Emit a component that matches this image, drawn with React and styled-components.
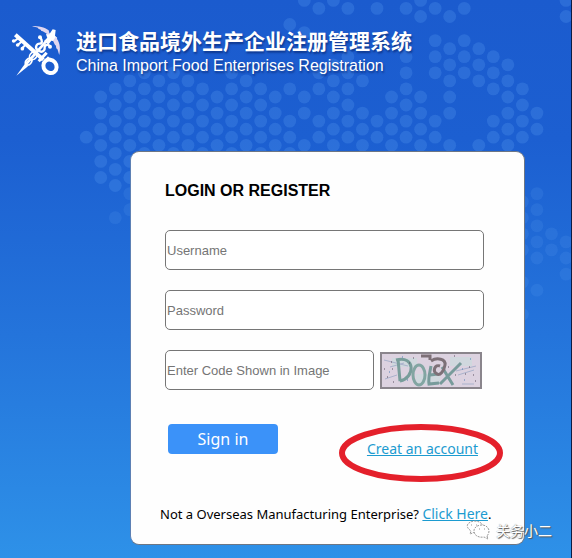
import React from 'react';
import styled, { createGlobalStyle } from 'styled-components';

const GlobalStyle = createGlobalStyle`
    * {
        box-sizing: border-box;
    }
    body {
        margin: 0;
        font-family: "Liberation Sans", Arial, sans-serif;
    }
`

const Page = styled.div`
    position: relative;
    display: flex;
    flex-direction: column;
    min-height: 100vh;
    overflow: hidden;
    border-right: 1px solid #0c1c44;
    background: linear-gradient(#1b5bce 0%, #1c5fd1 25%, #2474db 60%, #2e91e8 100%);
`
const MapArt = styled.svg`
    position: absolute;
    top: 0;
    left: 0;
    pointer-events: none;
`
const Header = styled.header`
    position: relative;
    display: flex;
    align-items: flex-start;
    gap: 14px;
    padding: 24px 10px 0;
    color: #fff;
`
const Titles = styled.div`
    display: flex;
    flex-direction: column;
    gap: 2px;
    padding-top: 3px;
    text-shadow: 1px 2px 2px rgba(0, 20, 80, 0.5);
`
const Title = styled.h1`
    margin: 0;
    font-family: "Noto Sans CJK SC", sans-serif;
    font-size: 21px;
    line-height: 26px;
    font-weight: bold;
`
const SubTitle = styled.span`
    font-size: 16px;
    line-height: 22px;
`
const Card = styled.form`
    position: relative;
    display: flex;
    flex-direction: column;
    margin: 74px 46px 13px 130px;
    padding: 29px 40px 20px 34px;
    border: 1px solid #6d7684;
    border-left-color: #5c80b4;
    border-radius: 9px;
    background-color: #fefefe;
`
const Heading = styled.h2`
    margin: 0 0 29px;
    font-size: 16px;
    line-height: 20px;
    color: #000;
`
const Field = styled.input`
    width: 100%;
    min-width: 0;
    height: 40px;
    margin-bottom: 20px;
    padding: 1px;
    border: 1px solid #767676;
    border-radius: 5px;
    background-color: #fff;
    font-family: inherit;
    font-size: 13px;
    &::placeholder {
        color: #757575;
        opacity: 1;
    }
`
const CodeRow = styled.div`
    display: flex;
    gap: 6px;
    padding-right: 2px;
`
const Captcha = styled.svg`
    flex: none;
    margin-top: 2px;
    border: 2px solid #8a858c;
`
const Actions = styled.div`
    display: flex;
    align-items: flex-start;
    justify-content: space-between;
    margin-top: 14px;
    padding: 0 6px 0 3px;
`
const SignIn = styled.button`
    width: 110px;
    height: 30px;
    padding: 0;
    border: none;
    border-radius: 4px;
    background-color: #3b92f9;
    color: #fff;
    font-family: "Noto Sans", sans-serif;
    font-size: 16px;
    cursor: pointer;
`
const Link = styled.a`
    color: #1c9bd0;
    font-family: "Noto Sans", sans-serif;
    font-size: 14px;
    line-height: 20px;
`
const Circled = styled.span`
    position: relative;
    margin-top: 15px;
`
const Ring = styled.svg`
    position: absolute;
    top: -17px;
    left: -29px;
    pointer-events: none;
`
const Note = styled.p`
    margin: 45px -20px 0 -5px;
    color: #000;
    font-family: "Noto Sans", sans-serif;
    font-size: 13px;
    line-height: 20px;
`
const Watermark = styled.div`
    position: absolute;
    right: 19px;
    bottom: 18px;
    display: flex;
    align-items: center;
    gap: 6px;
    color: #fff;
    font-family: "Noto Sans CJK SC", sans-serif;
    font-size: 14px;
    line-height: 20px;
    text-shadow: 1px 1px 1px #555, 0 0 1px #777;
`

// rows of dots that are filled in each column of the world map
const columns = {
    0: [8],
    1: [6, 7, 8, 9, 10, 11],
    2: [5, 6, 7, 8, 9, 10, 11, 13],
    3: [5, 6, 7, 8, 9, 10, 11, 12, 13],
    4: [4, 5, 6, 7, 8, 9],
    5: [5, 6, 7, 8, 9],
    6: [4, 5, 6, 7, 8, 9],
    7: [5, 6, 7, 8, 9],
    8: [5, 6, 7, 8, 9],
    9: [6, 7, 8, 9],
    10: [4, 5, 6, 7, 8, 9],
    11: [5, 6, 7, 8, 9],
    12: [5, 6, 7, 8, 9],
    13: [6, 7, 8, 9],
    14: [1, 5, 7, 8, 9],
    15: [0, 2, 6, 7, 9],
    16: [0, 4, 5, 7, 8],
    17: [0, 4, 5, 6, 7, 8, 9],
    18: [0, 3, 4, 5, 6, 7, 8],
    19: [5, 7, 8, 9],
    20: [0, 7, 8],
    21: [6, 7, 8, 9],
    22: [0, 3, 4, 5, 6, 7, 8],
    23: [0, 1, 6, 7, 8, 9],
    24: [0, 2, 3, 4, 7, 8],
    25: [1, 3, 4, 5, 6, 7, 9],
    26: [0, 2, 3, 4],
    27: [3, 4, 5, 9],
    28: [3, 4, 5, 7, 8],
    29: [4, 5, 6, 7, 8, 9],
    30: [5, 6, 7, 8, 12, 13, 14, 15, 17, 19],
    31: [7, 8, 12, 13, 14, 15, 16, 18],
    32: [14, 15],
    33: [0, 1, 15, 16, 17],
}

const WorldMap = () => (
    <MapArt width="571" height="340" aria-hidden="true">
        {Object.entries(columns).map(([col, rows]) =>
            rows.map((row) => (
                <circle
                    key={`${col}-${row}`}
                    cx={86.2 + 14.54 * col}
                    cy={(col % 2 ? 0.4 : 8.4) + 16.1 * row}
                    r="6.4"
                    fill="#5a9cf0"
                    opacity={row > 11 ? 0.18 : 0.27}
                />
            ))
        )}
    </MapArt>
)

const Logo = () => (
    <svg width="52" height="52" viewBox="30 27 156 156" fill="none" stroke="#fff" aria-hidden="true">
        <path d="M46 59L130 134" strokeWidth="12" />
        <path d="M56 68l-12 10M67 78l-13 11M78 88l-11 11" strokeWidth="6" />
        <circle cx="41" cy="78" r="5.5" fill="#fff" stroke="none" />
        <circle cx="53" cy="90" r="5.5" fill="#fff" stroke="none" />
        <circle cx="67" cy="101" r="5.5" fill="#fff" stroke="none" />
        <ellipse cx="150" cy="154" rx="19" ry="21" transform="rotate(-40 150 154)" strokeWidth="12" />
        <path d="M116 139l24-26" strokeWidth="9" />
        <path d="M127 146l19-20" strokeWidth="6" />
        <path d="M49 182l26-36 9 8z" fill="#fff" stroke="none" />
        <path d="M76 150L146 70" strokeWidth="8" />
        <ellipse cx="86" cy="140" rx="8" ry="11" transform="rotate(42 86 140)" strokeWidth="5" />
        <ellipse cx="100" cy="122" rx="10" ry="13" transform="rotate(42 100 122)" strokeWidth="5" />
        <path d="M113 106c-10-9-3-20 6-20s8-12 1-18M116 106c9 9 19 1 18-8s10-11 17-4" strokeWidth="7" />
        <circle cx="120" cy="67" r="6" fill="#fff" stroke="none" />
        <circle cx="150" cy="95" r="6" fill="#fff" stroke="none" />
        <path d="M138 58l12-3 8-12 9 2-2 17 7 7-8 10-10-2-9 12-13-11 10-9z" fill="#fff" stroke="none" />
        <path d="M96 33c20 0 38 3 50 13l3 12-6 1c-6-7-13-10-20-12 2-3-3-4-8-6 1-4-10-4-19-8z" fill="#e0d6f0" stroke="none" />
        <path d="M167 66c11 13 16 30 11 54-3-8-4-13-6-18-3-1-4-5-4-10-4-2-5-7-9-15z" fill="#e0d6f0" stroke="none" />
    </svg>
)

const CaptchaImage = () => (
    <Captcha width="102" height="37" viewBox="0 0 98 33" fill="none" role="img" aria-label="Verification code">
        <rect width="98" height="33" fill="#dcd2e0" />
        <path d="M10 4h25v9H10zM34 20h24v10H34zM68 3h22v9H68z" fill="#cbdadd" opacity=".7" />
        <path d="M2 6l24 6M8 13l14-4M76 21l16-5M74 17l20-5M3 25l12-4M80 30h12" stroke="#aab2cc" />
        <path d="M16 5l2 22M14 6c20-5 19 18 4 21" stroke="#789d9b" strokeWidth="3" />
        <ellipse cx="37" cy="21" rx="6" ry="10" stroke="#82a5a2" strokeWidth="3" />
        <path d="M49 12c-1 6-3 12-2 18l10-1M48 21l8-1M60 13l11 18M79 9L58 30" stroke="#789b9b" strokeWidth="3" />
        <path d="M39 2h9v4M49 7c6-4 15-2 14 4-1 6-5 11-8 9-5-3-2-10 3-8" stroke="#7d7077" strokeWidth="3" />
        <path d="M2 15h1M5 23h1M10 15h1M9 8h1M27 9h1M31 4h1M11 28h1M66 13h1M73 21h1M83 20h1M91 21h1M93 27h1M87 13h1M72 2h1" stroke="#5b4f60" strokeWidth="1" />
        <path d="M20 3h1M7 18h1M88 5h1M80 15h1M25 26h1M82 26h1" stroke="#557eb4" strokeWidth="1" />
    </Captcha>
)

const WeChatMark = () => (
    <svg width="25" height="20" viewBox="0 0 25 20" fill="none" stroke="#999" strokeWidth="1" strokeDasharray="2 1" aria-hidden="true">
        <path d="M10 12l-5 2 1-3C-1 6 3 2 9 1c5 0 8 2 9 5" fill="#fff" />
        <path d="M22 16l1 3-4-2c-6 1-10-2-10-6s4-6 8-6 7 3 7 6c0 2-1 4-2 5z" fill="#fff" />
        <path d="M6 5h1M11 5h1M14 9h1M19 9h1" strokeDasharray="none" />
    </svg>
)

const App = () => {
    return (
        <>
            <GlobalStyle />
            <Page>
                <WorldMap />
                <Header>
                    <Logo />
                    <Titles>
                        <Title lang="zh-CN">进口食品境外生产企业注册管理系统</Title>
                        <SubTitle>China Import Food Enterprises Registration</SubTitle>
                    </Titles>
                </Header>
                <Card onSubmit={(e) => e.preventDefault()}>
                    <Heading>LOGIN OR REGISTER</Heading>
                    <Field type="text" placeholder="Username" aria-label="Username" />
                    <Field type="password" placeholder="Password" aria-label="Password" />
                    <CodeRow>
                        <Field type="text" placeholder="Enter Code Shown in Image" aria-label="Enter Code Shown in Image" />
                        <CaptchaImage />
                    </CodeRow>
                    <Actions>
                        <SignIn type="submit">Sign in</SignIn>
                        <Circled>
                            <Link href="#register">Creat an account</Link>
                            <Ring width="166" height="62" viewBox="0 0 166 62" fill="none" aria-hidden="true">
                                <ellipse cx="83" cy="31" rx="79" ry="26" stroke="#e4202b" strokeWidth="6" />
                            </Ring>
                        </Circled>
                    </Actions>
                    <Note>
                        Not a Overseas Manufacturing Enterprise? <Link href="#help">Click Here</Link>.
                    </Note>
                </Card>
                <Watermark>
                    <WeChatMark />
                    <span lang="zh-CN">关务小二</span>
                </Watermark>
            </Page>
        </>
    );
};

export default App;
